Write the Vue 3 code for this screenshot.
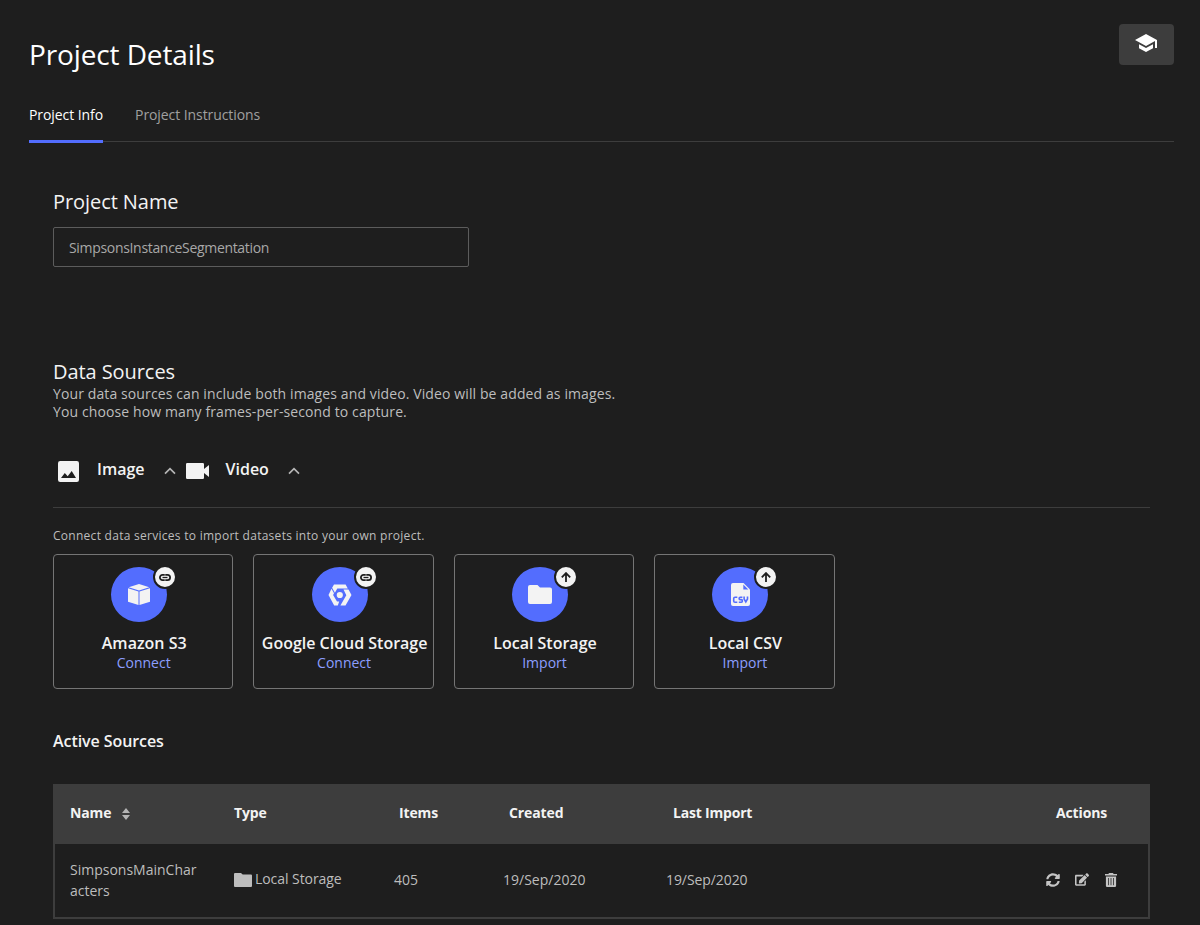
<script setup>
const sources = [
  { name: 'Amazon S3', action: 'Connect', icon: 'box', badge: 'link' },
  { name: 'Google Cloud Storage', action: 'Connect', icon: 'gcs', badge: 'link' },
  { name: 'Local Storage', action: 'Import', icon: 'folder', badge: 'up' },
  { name: 'Local CSV', action: 'Import', icon: 'csv', badge: 'up' },
]
</script>

<template>
  <main class="page">
    <header class="top">
      <h1>Project Details</h1>
      <button class="learn" aria-label="Tutorials">
        <svg width="24" height="24" viewBox="0 0 24 24" fill="#fff"><path d="M5 13.18v4L12 21l7-3.82v-4L12 17l-7-3.82zM12 3L1 9l11 6 9-4.91V17h2V9L12 3z" /></svg>
      </button>
    </header>

    <nav class="tabs">
      <a class="tab active">Project Info</a>
      <a class="tab">Project Instructions</a>
    </nav>

    <section class="content">
      <h2 class="h-name">Project Name</h2>
      <div class="field"><span>SimpsonsInstanceSegmentation</span></div>

      <h2 class="h-data">Data Sources</h2>
      <p class="desc">Your data sources can include both images and video. Video will be added as images.<br />You choose how many frames-per-second to capture.</p>

      <div class="kinds">
        <svg class="k-img" width="21" height="21" viewBox="0 0 21 21"><rect width="21" height="21" rx="2.2" fill="#f3f3f3" /><path d="M3 17l3.8-5 2.9 3.3 4-5.3L18 17z" fill="#1e1e1e" /></svg>
        <b class="l-img">Image</b>
        <svg class="chev c1" width="12" height="8" viewBox="0 0 12 8"><path d="M1 6.7l5-5 5 5" /></svg>
        <svg class="k-vid" width="23" height="16" viewBox="0 0 23 16"><path d="M1.2 0h15.6Q18 0 18 1.2V6l5-4v12l-5-4v4.8Q18 16 16.8 16H1.2Q0 16 0 14.8V1.2Q0 0 1.2 0z" fill="#f3f3f3" /></svg>
        <b class="l-vid">Video</b>
        <svg class="chev" width="12" height="8" viewBox="0 0 12 8"><path d="M1 6.7l5-5 5 5" /></svg>
      </div>

      <p class="hint">Connect data services to import datasets into your own project.</p>

      <div class="cards">
        <article v-for="s in sources" :key="s.name" class="card">
          <div class="logo">
            <div class="disc">
              <svg v-if="s.icon === 'box'" width="22" height="21" viewBox="0 0 22 21" fill="#f3f3f3"><path d="M11 0l10.3 3.3L11 6.5.7 3.3zM0 4.3l10.5 3.2V21L0 17.7zM22 4.3L11.5 7.5V21L22 17.7z" /></svg>
              <svg v-else-if="s.icon === 'gcs'" width="24" height="22" viewBox="0 0 24 22" fill="#f3f3f3"><path d="M6 .5h11.6L19.8 4.6H9.3L6.9 8.7 4.1 3.7zM3.5 4.7L6 9.2 5.1 11l3.9 6.4h2.2L9.8 21.5H6.2L.5 11zM18.7 5.4h1.8L23.5 11l-6 10.5h-5.1L18.3 11.3l-2.8-5.9z" /><circle cx="11.8" cy="11" r="3.1" /></svg>
              <svg v-else-if="s.icon === 'folder'" width="24" height="19" viewBox="0 0 24 19" fill="#f3f3f3"><path d="M2 0h7.5L12 2.500h10a2 2 0 0 1 2 2V17a2 2 0 0 1-2 2H2a2 2 0 0 1-2-2V2a2 2 0 0 1 2-2z" /></svg>
              <svg v-else width="19" height="23" viewBox="0 0 19 23"><path d="M2 0h10.500L19 6.500V21a2 2 0 0 1-2 2H2a2 2 0 0 1-2-2V2a2 2 0 0 1 2-2z" fill="#f3f3f3" /><path d="M6.300 14.200H4q-1.300 0-1.300 1.300v2.400q0 1.300 1.300 1.300h2.300M11.400 14.200H9.200q-1.100 0-1.100 1.200t1.100 1.200h1.100q1.100.1 1.100 1.300t-1.100 1.300H7.800M13.100 13.500v2.500l1.700 3 1.700-3v-2.500" fill="none" stroke="#536dfe" stroke-width="1.600" /><path d="M12.300 1.600l5 5h-5z" fill="#536dfe" /></svg>
            </div>
            <div class="badge">
              <svg v-if="s.badge === 'link'" width="12" height="7" viewBox="0 0 12 7" fill="none" stroke="#1e1e1e"><rect x=".9" y=".9" width="10.200" height="5.200" rx="2.600" stroke-width="1.800" /><path d="M3.500 3.500h5" stroke-width="1.300" /><path d="M6 0v2M6 5v2" stroke="#f3f3f3" stroke-opacity=".5" stroke-width="1" /></svg>
              <svg v-else width="10" height="10" viewBox="0 0 10 10" fill="none" stroke="#1e1e1e" stroke-width="1.800"><path d="M5 10V1.300M.8 5.300L5 1.100l4.200 4.200" /></svg>
            </div>
          </div>
          <h3>{{ s.name }}</h3>
          <a>{{ s.action }}</a>
        </article>
      </div>

      <h3 class="active-title">Active Sources</h3>

      <div class="table">
        <div class="row head">
          <b>Name<svg class="sort" width="8" height="12" viewBox="0 0 8 12" fill="#b5b5b5"><path d="M0 5l4-5 4 5zM0 7h8l-4 5z" /></svg></b>
          <b>Type</b><b>Items</b><b>Created</b><b class="last">Last Import</b><b>Actions</b>
        </div>
        <div class="row body">
          <span class="name">SimpsonsMainCharacters</span>
          <span class="type"><svg width="18" height="14" viewBox="0 0 18 14" fill="#bdbdbd"><path d="M1 0h6l1.700 1.500H17q1 0 1 1V13q0 1-1 1H1q-1 0-1-1V1q0-1 1-1z" /></svg><span>Local Storage</span></span>
          <span>405</span>
          <span>19/Sep/2020</span>
          <span class="date2">19/Sep/2020</span>
          <span class="acts">
            <svg width="14" height="14" viewBox="0 0 512 512" fill="#c4c4c4"><path d="M370.720 133.280C339.458 104.008 298.888 87.962 255.848 88c-77.458.068-144.328 53.178-162.791 126.850-1.344 5.363-6.122 9.150-11.651 9.150H24.103c-7.498 0-13.194-6.807-11.807-14.176C33.933 94.924 134.813 8 256 8c66.448 0 126.791 26.136 171.315 68.685L463.030 40.970C478.149 25.851 504 36.559 504 57.941V192c0 13.255-10.745 24-24 24H345.941c-21.382 0-32.090-25.851-16.971-40.971l41.750-41.749zM32 296h134.059c21.382 0 32.090 25.851 16.971 40.971l-41.750 41.750c31.262 29.273 71.835 45.319 114.876 45.280 77.418-.070 144.315-53.144 162.787-126.849 1.344-5.363 6.122-9.150 11.651-9.150h57.304c7.498 0 13.194 6.807 11.807 14.176C478.067 417.076 377.187 504 256 504c-66.448 0-126.791-26.136-171.315-68.685L48.970 471.030C33.851 486.149 8 475.441 8 454.059V320c0-13.255 10.745-24 24-24z" /></svg>
            <svg width="14" height="13" viewBox="0 0 576 512" fill="#c4c4c4"><path d="M402.600 83.200l90.200 90.200c3.800 3.800 3.800 10 0 13.800L274.400 405.600l-92.800 10.300c-12.400 1.400-22.900-9.100-21.500-21.500l10.300-92.800L388.800 83.200c3.800-3.800 10-3.800 13.800 0zm162-22.900l-48.800-48.800c-15.200-15.200-39.900-15.200-55.200 0l-35.400 35.400c-3.800 3.800-3.800 10 0 13.800l90.200 90.200c3.800 3.800 10 3.800 13.800 0l35.400-35.400c15.200-15.300 15.200-40 0-55.200zM384 346.200V448H64V128h229.800c3.200 0 6.200-1.300 8.500-3.500l40-40c7.600-7.600 2.200-20.500-8.500-20.500H48C21.500 64 0 85.500 0 112v352c0 26.500 21.500 48 48 48h352c26.500 0 48-21.500 48-48V306.200c0-10.700-12.900-16-20.500-8.500l-40 40c-2.200 2.300-3.500 5.300-3.500 8.500z" /></svg>
            <svg width="12" height="14" viewBox="0 0 12 14"><path d="M4 0h4l.6 1H12v1.500H0V1h3.400zM.9 3.400h10.200V12.800q0 1.200-1.200 1.200H2.100Q.9 14 .9 12.800z" fill="#c4c4c4" /><path d="M3.500 5v7.200M6 5v7.200M8.500 5v7.200" stroke="#3a3a3a" stroke-width=".9" /></svg>
          </span>
        </div>
      </div>
    </section>
  </main>
</template>

<style>
body { background: #1e1e1e; }
html { overflow: hidden; }
</style>

<style scoped>
.page { box-sizing: border-box; width: 1200px; height: 925px; overflow: hidden; padding: 24px 26px 0 29px; background: #1e1e1e; color: #f3f3f3; font-family: "Open Sans", sans-serif; font-size: 14px; }
h1, h2, h3, p { margin: 0; font-weight: 400; white-space: nowrap; }
svg { display: block; flex: none; }
.top { display: flex; justify-content: space-between; height: 72px; }
h1 { font-size: 28px; line-height: 38px; margin-top: 11px; color: #fff; letter-spacing: -0.12px; }
.learn { width: 55px; height: 41px; border: 0; border-radius: 4px; background: #3d3d3d; padding: 0 2px 3px 0; display: flex; align-items: center; justify-content: center; }
.tabs { display: flex; gap: 32px; height: 45px; border-bottom: 1px solid #3d3d3d; }
.tab { box-sizing: border-box; height: 47px; padding-top: 9px; line-height: 20px; color: #a0a0a0; white-space: nowrap; letter-spacing: -0.075px; }
.tab.active { color: #fff; border-bottom: 3px solid #536dfe; }
.content { padding: 0 24px; }
h2 { font-size: 20px; line-height: 27px; letter-spacing: -0.07px; }
.h-name { margin-top: 46px; }
.field { box-sizing: border-box; width: 416px; height: 40px; margin-top: 12px; padding-left: 15px; border: 1px solid #5c5c5c; border-radius: 2px; line-height: 39px; color: #a8a8a8; letter-spacing: -0.32px; }
.h-data { margin-top: 91px; }
.desc { line-height: 18px; color: #bdbdbd; letter-spacing: 0.11px; }
.kinds { display: flex; align-items: flex-start; height: 58px; padding: 28px 0 0 5px; border-bottom: 1px solid #3d3d3d; }
.kinds b { font-size: 16px; font-weight: 600; line-height: 22px; margin-top: 9px; }
.k-img { margin-top: 12px; }
.l-img { width: 67px; margin-left: 18px; }
.kinds .l-vid { width: 62.5px; margin-left: 16.5px; }
.k-vid { margin-top: 14px; }
.chev { margin-top: 18px; fill: none; stroke: #b5b5b5; stroke-width: 1.7; }
.c1 { margin-right: 10px; }
.hint { font-size: 12px; line-height: 18px; margin-top: 19px; color: #bdbdbd; letter-spacing: 0.275px; }
.cards { display: grid; grid-template-columns: repeat(4, 1fr); gap: 20px; width: 781.6px; margin-top: 9px; }
.card { box-sizing: border-box; height: 135px; min-width: 0; border: 1px solid #757575; border-radius: 4px; padding-top: 12px; display: flex; flex-direction: column; align-items: center; }
.logo { position: relative; width: 64px; height: 55px; }
.disc { width: 56px; height: 55px; border-radius: 50%; background: #536dfe; display: flex; align-items: center; justify-content: center; }
.badge { position: absolute; top: -2px; right: -2px; width: 20px; height: 20px; border: 2px solid #1e1e1e; border-radius: 50%; background: #f3f3f3; display: flex; align-items: center; justify-content: center; }
.card h3 { font-size: 16px; font-weight: 600; line-height: 22px; margin-top: 10px; padding-left: 2px; }
.card a { line-height: 18px; padding-left: 1px; color: #8c9eff; }
.active-title { font-size: 16px; font-weight: 600; line-height: 22px; margin-top: 41px; letter-spacing: -0.07px; }
.table { box-sizing: border-box; height: 135px; margin-top: 32px; border: 2px solid #3d3d3d; }
.row { display: grid; align-items: center; padding-left: 15px; }
.head { grid-template-columns: 164px 165px 110px 164px 383px 1fr; height: 58px; background: #3d3d3d; }
.head b { font-weight: 700; display: flex; align-items: center; line-height: 20px; margin-top: -5px; letter-spacing: -0.12px; }
.head .last { letter-spacing: -0.2px; }
.sort { margin: 2px 0 0 11px; }
.body { box-sizing: border-box; grid-template-columns: 164px 160px 109px 163px 380px 1fr; height: 73px; padding-bottom: 2px; color: #bdbdbd; }
.name { width: 130px; line-height: 21px; overflow-wrap: anywhere; }
.type { display: flex; align-items: center; gap: 3px; letter-spacing: -0.06px; }
.type span { margin-top: -3px; }
.date2 { letter-spacing: -0.08px; }
.acts { display: flex; align-items: center; gap: 15px; }
.acts svg:last-child { margin-left: 1px; }
</style>
